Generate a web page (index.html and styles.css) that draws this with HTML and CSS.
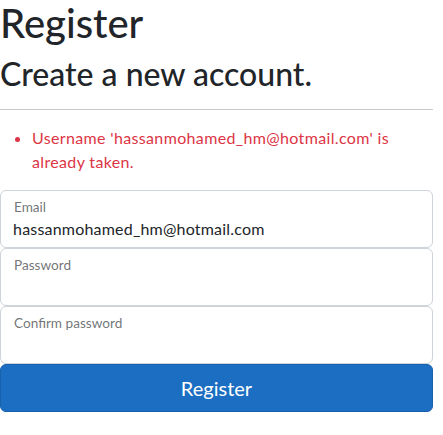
FILE: index.html
```html
<!DOCTYPE html>
<html lang="en">
<head>
<meta charset="utf-8">
<title>Register</title>
<link rel="stylesheet" href="styles.css">
</head>
<body>
<main class="page">
  <h1 class="title">Register</h1>
  <form class="register-form">
    <h2 class="subtitle">Create a new account.</h2>
    <hr class="divider">
    <div class="validation-summary">
      <ul class="error-list">
        <li>Username 'hassanmohamed_hm@hotmail.com' is already taken.</li>
      </ul>
    </div>
    <div class="fields">
      <div class="field">
        <label class="field-label" for="email">Email</label>
        <input class="field-input" id="email" type="email" value="hassanmohamed_hm@hotmail.com">
      </div>
      <div class="field">
        <label class="field-label" for="password">Password</label>
        <input class="field-input" id="password" type="password">
      </div>
      <div class="field">
        <label class="field-label" for="confirm">Confirm password</label>
        <input class="field-input" id="confirm" type="password">
      </div>
      <button class="submit-btn" type="submit">Register</button>
    </div>
  </form>
</main>
</body>
</html>
```
FILE: styles.css
```css
html, body {
  margin: 0;
  padding: 0;
  background: #fff;
}

body {
  font-family: Lato, "Liberation Sans", Arial, sans-serif;
  font-size: 16px;
  line-height: 1.5;
  color: #212529;
}

.page {
  width: 433px;
  margin-top: -1px;
}

.title {
  margin: 0 0 8px;
  font-size: 40px;
  font-weight: 500;
  line-height: 48px;
}

.register-form {
  margin: 0;
}

.subtitle {
  margin: 0;
  font-size: 32px;
  font-weight: 500;
  line-height: 38.4px;
}

.divider {
  margin: 16px 0;
  border: 0;
  border-top: 1px solid #c8c9ca;
  height: 0;
}

.validation-summary {
  color: #dc3545;
  letter-spacing: 0.35px;
}

.error-list {
  margin: 0 0 16px;
  padding-left: 32px;
}

.fields {
  display: flex;
  flex-direction: column;
}

.field {
  display: flex;
  flex-direction: column;
  height: 58px;
  box-sizing: border-box;
  padding: 7px 12px 6px;
  border: 1px solid #ced4da;
  border-radius: 6px;
  background: #fff;
}

.field-label {
  font-size: 13.6px;
  line-height: 19px;
  color: rgba(33, 37, 41, 0.65);
  padding-left: 1px;
}

.field-input {
  display: block;
  width: 100%;
  height: 24px;
  margin: 0;
  padding: 0;
  border: 0;
  outline: none;
  background: transparent;
  font: inherit;
  font-size: 16px;
  line-height: 24px;
  letter-spacing: 0.2px;
  color: #212529;
}

.submit-btn {
  display: block;
  width: 100%;
  height: 48px;
  margin: 0;
  padding: 8px 16px;
  border: 1px solid #1861ac;
  border-radius: 6px;
  background: #1b6ec2;
  color: #fff;
  font-family: inherit;
  font-size: 20px;
  line-height: 30px;
  text-align: center;
}
```
